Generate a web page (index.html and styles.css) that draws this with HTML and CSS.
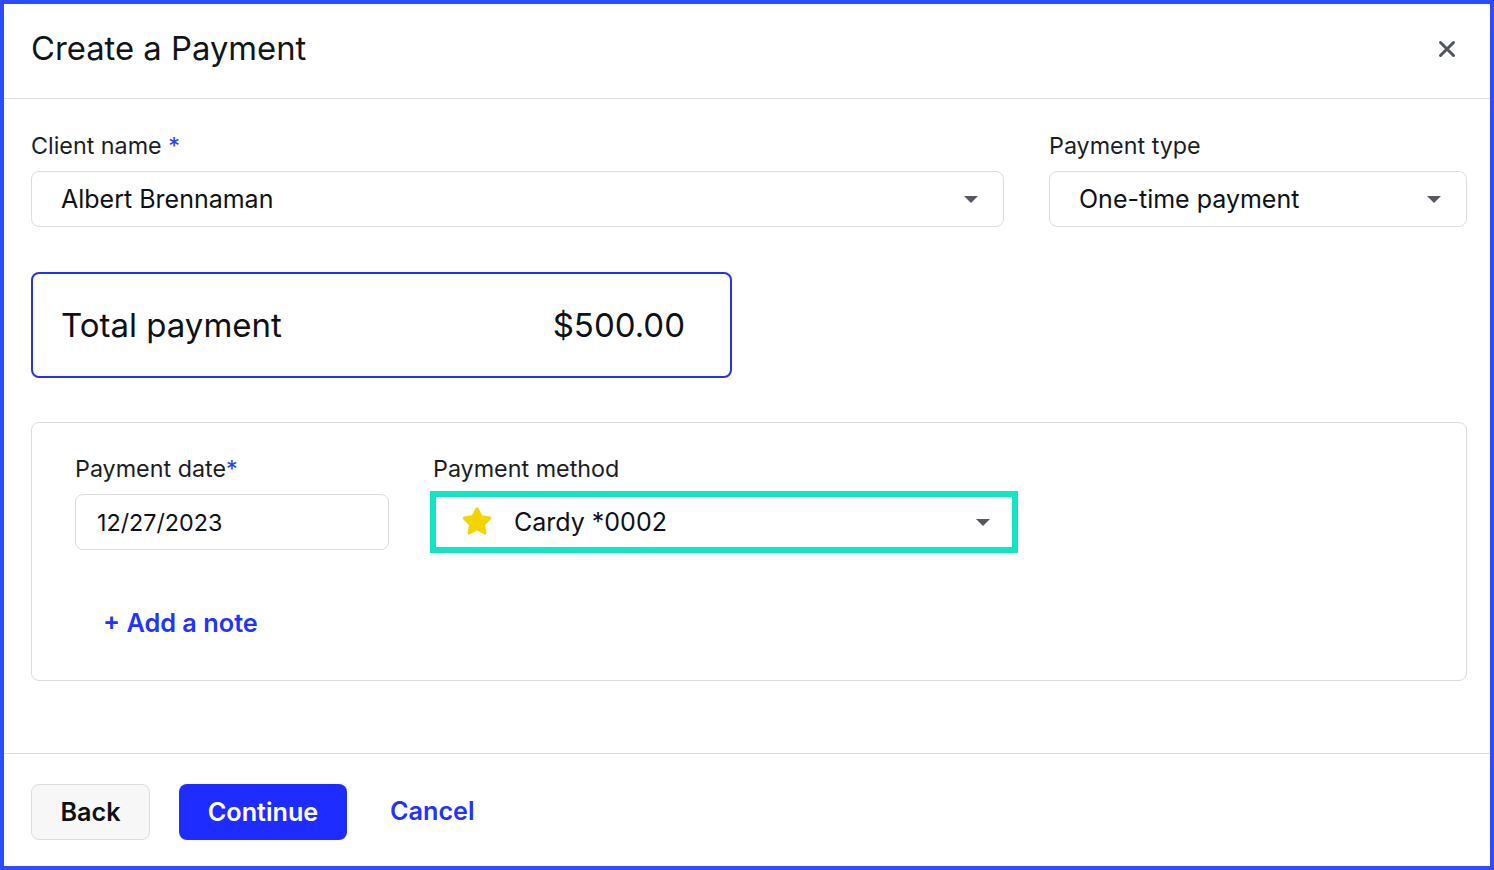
FILE: index.html
```html
<!DOCTYPE html>
<html lang="en">
<head>
<meta charset="utf-8">
<title>Create a Payment</title>
<link rel="stylesheet" href="styles.css">
</head>
<body>
<div class="frame">
  <header class="header">
    <h1 class="title">Create a Payment</h1>
    <button class="close" aria-label="Close">
      <svg width="18" height="18" viewBox="0 0 18 18"><path d="M2.5 2.5 L15.5 15.5 M15.5 2.5 L2.5 15.5" stroke="#50545c" stroke-width="3" stroke-linecap="round" fill="none"/></svg>
    </button>
  </header>
  <main class="main">
    <div class="row-top">
      <div class="field">
        <label class="label">Client name <span class="req">*</span></label>
        <div class="select">
          <span class="value">Albert Brennaman</span>
          <span class="caret"></span>
        </div>
      </div>
      <div class="field">
        <label class="label">Payment type</label>
        <div class="select">
          <span class="value">One-time payment</span>
          <span class="caret"></span>
        </div>
      </div>
    </div>
    <div class="total">
      <span>Total payment</span>
      <span>$500.00</span>
    </div>
    <section class="card">
      <div class="card-row">
        <div class="field date-field">
          <label class="label">Payment date<span class="req">*</span></label>
          <div class="input">12/27/2023</div>
        </div>
        <div class="field method-field">
          <label class="label">Payment method</label>
          <div class="select method">
            <svg class="star" width="34" height="32" viewBox="0 0 24 23"><path d="M12 1.6c.5 0 .9.3 1.1.7l2.5 5.1 5.6.8c1 .1 1.4 1.4.7 2.1l-4.1 4 1 5.6c.2 1-.9 1.7-1.7 1.2L12 18.4l-5.1 2.7c-.9.5-1.9-.3-1.7-1.2l1-5.6-4.1-4c-.7-.7-.3-2 .7-2.1l5.6-.8 2.5-5.1c.2-.4.6-.7 1.1-.7z" fill="#f4d400"/></svg>
            <span class="value">Cardy *0002</span>
            <span class="caret"></span>
          </div>
        </div>
      </div>
      <a class="add-note" href="#">+ Add a note</a>
    </section>
  </main>
  <footer class="footer">
    <button class="btn btn-back">Back</button>
    <button class="btn btn-primary">Continue</button>
    <a class="btn-link" href="#">Cancel</a>
  </footer>
</div>
</body>
</html>
```

FILE: styles.css
```css
* { box-sizing: border-box; }
html, body { margin: 0; padding: 0; }
body {
  font-family: Inter, "Noto Sans", "Liberation Sans", sans-serif;
  color: #0e1116;
  background: #fff;
}
.frame {
  width: 1494px;
  height: 870px;
  border: 4px solid #2d4cff;
  display: flex;
  flex-direction: column;
}
.header {
  height: 95px;
  flex: none;
  border-bottom: 1px solid #dcdcdc;
  display: flex;
  align-items: center;
  justify-content: space-between;
  padding: 0 34px 6px 27px;
}
.title {
  margin: 0;
  font-size: 32.8px;
  font-weight: 400;
  color: #11151a;
}
.close {
  border: 0;
  background: none;
  padding: 0;
  width: 18px;
  height: 18px;
  display: flex;
  margin-top: 2px;
}
.main {
  flex: 1;
  padding: 33px 23px 0 27px;
}
.row-top {
  display: grid;
  grid-template-columns: 1fr 418px;
  column-gap: 45px;
}
.field { display: flex; flex-direction: column; }
.label {
  font-size: 23.3px;
  line-height: 28px;
  color: #1a1e24;
  margin-bottom: 11px;
}
.req { color: #2b3cff; }
.select, .input {
  height: 56px;
  border: 1px solid #dcdcdc;
  border-radius: 8px;
  display: flex;
  align-items: center;
  padding: 0 25px 0 29px;
  font-size: 25px;
  color: #0e1116;
}
.select .value { flex: 1; }
.caret {
  width: 0;
  height: 0;
  border-left: 7px solid transparent;
  border-right: 7px solid transparent;
  border-top: 7px solid #55585e;
}
.total {
  margin-top: 45px;
  width: 701px;
  height: 106px;
  border: 2px solid #2233ee;
  border-radius: 8px;
  display: flex;
  align-items: center;
  justify-content: space-between;
  padding: 0 45px 0 28px;
  font-size: 33px;
  color: #0e1116;
}
.card {
  margin-top: 44px;
  height: 259px;
  border: 1px solid #dcdcdc;
  border-radius: 8px;
  padding: 32px 43px 0 43px;
}
.card-row {
  display: flex;
  gap: 44px;
}
.date-field { width: 314px; }
.input { padding-left: 21px; font-size: 23.3px; }
.method-field { width: 582px; }
.method {
  border: 3px solid #12e4c6;
  box-shadow: 0 0 0 3px #12e4c6;
  border-radius: 0;
  padding-left: 24px;
  padding-right: 22px;
}
.star { margin-right: 20px; margin-top: -2px; }
.add-note {
  display: inline-block;
  margin-top: 57px;
  margin-left: 28px;
  font-size: 25.3px;
  font-weight: 600;
  color: #2233ff;
  text-decoration: none;
}
.footer {
  height: 113px;
  flex: none;
  border-top: 1px solid #dcdcdc;
  display: flex;
  align-items: flex-start;
  padding: 30px 27px 0 27px;
  gap: 29px;
}
.btn {
  height: 56px;
  border-radius: 8px;
  font-family: inherit;
  font-size: 25.2px;
  font-weight: 600;
  cursor: pointer;
}
.btn-back {
  width: 119px;
  background: #f7f7f7;
  border: 1px solid #dcdcdc;
  color: #0e1116;
}
.btn-primary {
  width: 168px;
  background: #1f2cff;
  border: 0;
  color: #fff;
}
.btn-link {
  align-self: center;
  margin-top: -28px;
  margin-left: 14px;
  font-size: 25.2px;
  font-weight: 600;
  color: #2233ff;
  text-decoration: none;
}
```
